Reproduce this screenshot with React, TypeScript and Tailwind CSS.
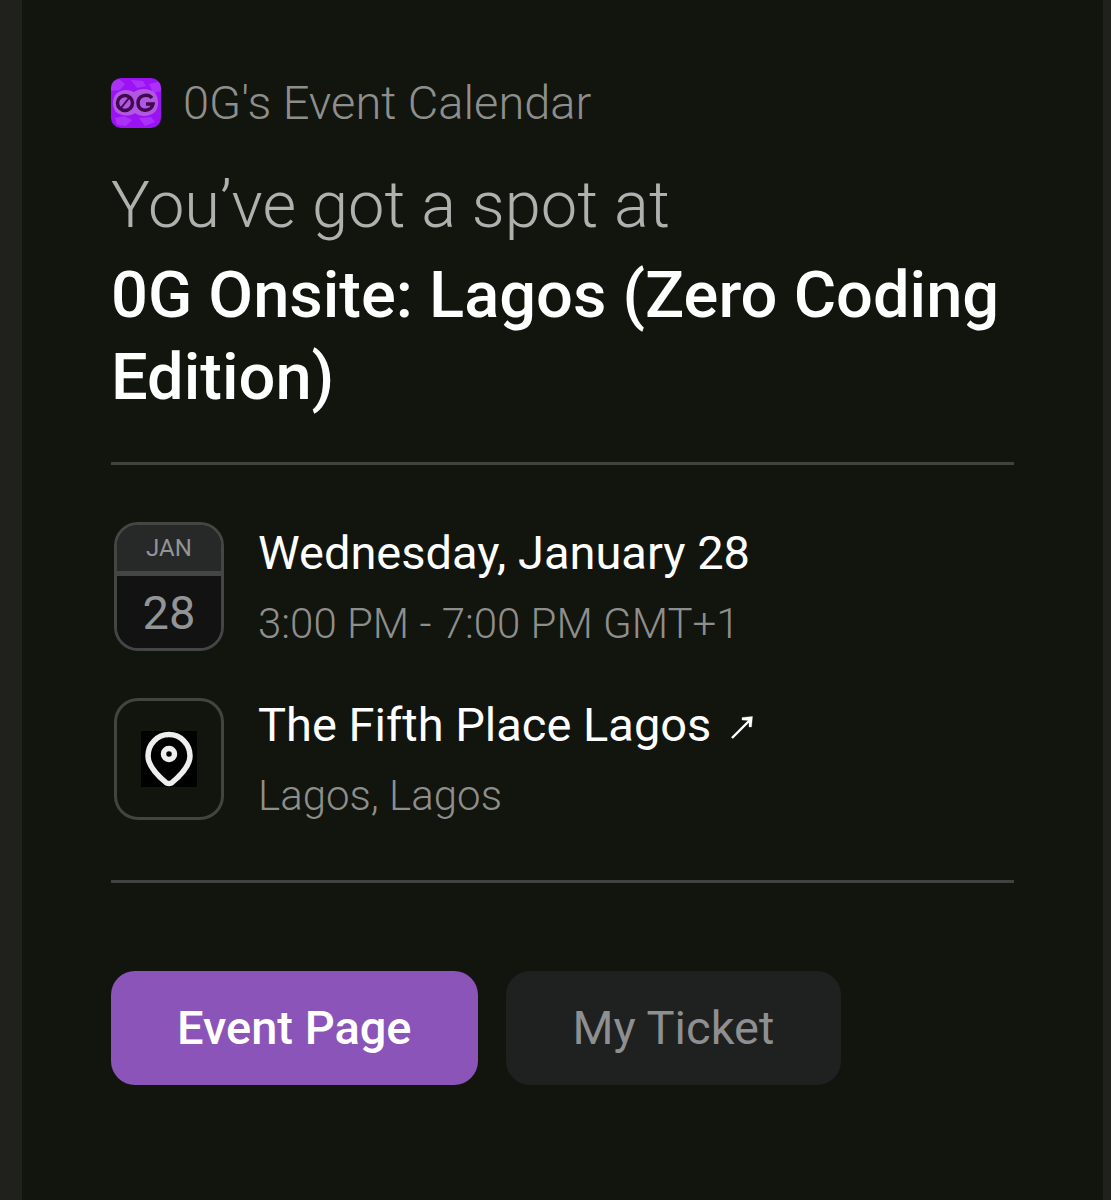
const divider = "border-0 border-t-3 border-[#40423f]";

function CalendarLogo() {
    return (
        <svg viewBox="0 0 50 50" className="size-[50px] shrink-0 rounded-[10px]" aria-hidden="true">
            <rect width="50" height="50" fill="#9b12f5" />
            <g fill="#ab30f8">
                <path d="M0 4 8 1l6 5-5 6-9 1ZM20 2l12 1 3 5-9 2ZM38 6l12-3v10l-8 2ZM4 40l9-2 8 4-6 6-9-1ZM28 40l12-1 4 5-10 4Z" />
            </g>
            <path d="M5 16c5-5 12-5 18-2 6-4 15-4 21 1 4 5 4 14 0 19-6 5-15 5-20 1-6 4-14 3-19-1-4-5-4-13 0-18Z" fill="#b157e2" />
            <g fill="none" stroke="#42084f" strokeWidth="3.500">
                <ellipse cx="14" cy="25" rx="7.500" ry="7.500" />
                <path d="m10 30 8-10" strokeWidth="2" />
                <path d="M41 20c-4-5-14-3-14 5 0 9 13 10 15 1h-7" />
            </g>
        </svg>
    );
}

export default function App() {
    return (
        <div className="min-h-screen bg-[#20201c] pl-[22px] pr-2 font-[Roboto,sans-serif]">
            <main className="min-h-screen bg-[#12140e] pt-[78px] pl-[89px] pr-[89px] pb-20">
                {/* HOST */}
                <div className="flex items-center gap-[22px]">
                    <CalendarLogo />
                    <p className="text-[47px] leading-[50px] font-light text-[#8e8f8c]">0G's Event Calendar</p>
                </div>

                {/* TITLE */}
                <h1 className="mt-9 text-[65px] leading-[82px]">
                    <span className="block font-light text-[#b0b1ae]">You’ve got a spot at</span>
                    <span className="mt-2 block font-medium text-white">0G Onsite: Lagos (Zero Coding Edition)</span>
                </h1>
                <hr className={`mt-11 ${divider}`} />

                {/* DATE AND PLACE */}
                <section className="mt-[57px] flex flex-col gap-[47px] pl-[3px]">
                    <div className="flex gap-[34px]">
                        <div className="flex h-[129px] w-[110px] shrink-0 flex-col overflow-hidden rounded-3xl border-3 border-[#444645] text-center text-[#939495]">
                            <div className="border-b-5 border-[#444645] bg-[#272929] text-[24px] leading-[46px]">JAN</div>
                            <div className="grow bg-[#121212] text-[47px] leading-[74px]">28</div>
                        </div>
                        <div className="pt-1">
                            <p className="text-[47px] leading-[54px] text-white">Wednesday, January 28</p>
                            <p className="mt-[17px] text-[42px] leading-[54px] font-light text-[#8e8f8c]">3:00 PM - 7:00 PM GMT+1</p>
                        </div>
                    </div>
                    <div className="flex gap-[34px]">
                        <div className="flex h-[122px] w-[110px] shrink-0 items-center justify-center rounded-3xl border-3 border-[#424440]">
                            <svg viewBox="0 0 56 56" className="size-14 bg-black" fill="none" stroke="#eee" strokeWidth="5.500" aria-hidden="true">
                                <path d="M25.500 52C17 45 7 35 7 25a21 21.500 0 0 1 42 0c0 10-10 20-18.500 27q-2.500 1-5 0Z" strokeLinejoin="round" />
                                <circle cx="28" cy="23" r="5.500" />
                            </svg>
                        </div>
                        <div>
                            <a href="#map" className="flex items-center gap-4 text-[47px] leading-[54px] text-white">
                                The Fifth Place Lagos
                                <svg viewBox="0 0 28 28" className="mt-1 size-7" fill="none" stroke="#fff" strokeWidth="2.400" aria-hidden="true">
                                    <path d="M5 25 24 6" />
                                    <path d="M15 4.500 25.500 3.500 24.500 14 22 14 22 7.500 15 7Z" fill="#fff" strokeWidth="0.300" />
                                </svg>
                            </a>
                            <p className="mt-[17px] text-[42px] leading-[54px] font-light text-[#8e8f8c]">Lagos, Lagos</p>
                        </div>
                    </div>
                </section>
                <hr className={`mt-[57px] ${divider}`} />

                {/* ACTIONS */}
                <div className="mt-[88px] flex flex-wrap gap-7">
                    <button type="button" className="h-[114px] rounded-3xl bg-[#8a54b8] px-[66px] text-[47px] font-medium text-white">Event Page</button>
                    <button type="button" className="h-[114px] rounded-3xl bg-[#1f2121] px-[67px] text-[47px] text-[#8e8f90]">My Ticket</button>
                </div>
            </main>
        </div>
    );
}
